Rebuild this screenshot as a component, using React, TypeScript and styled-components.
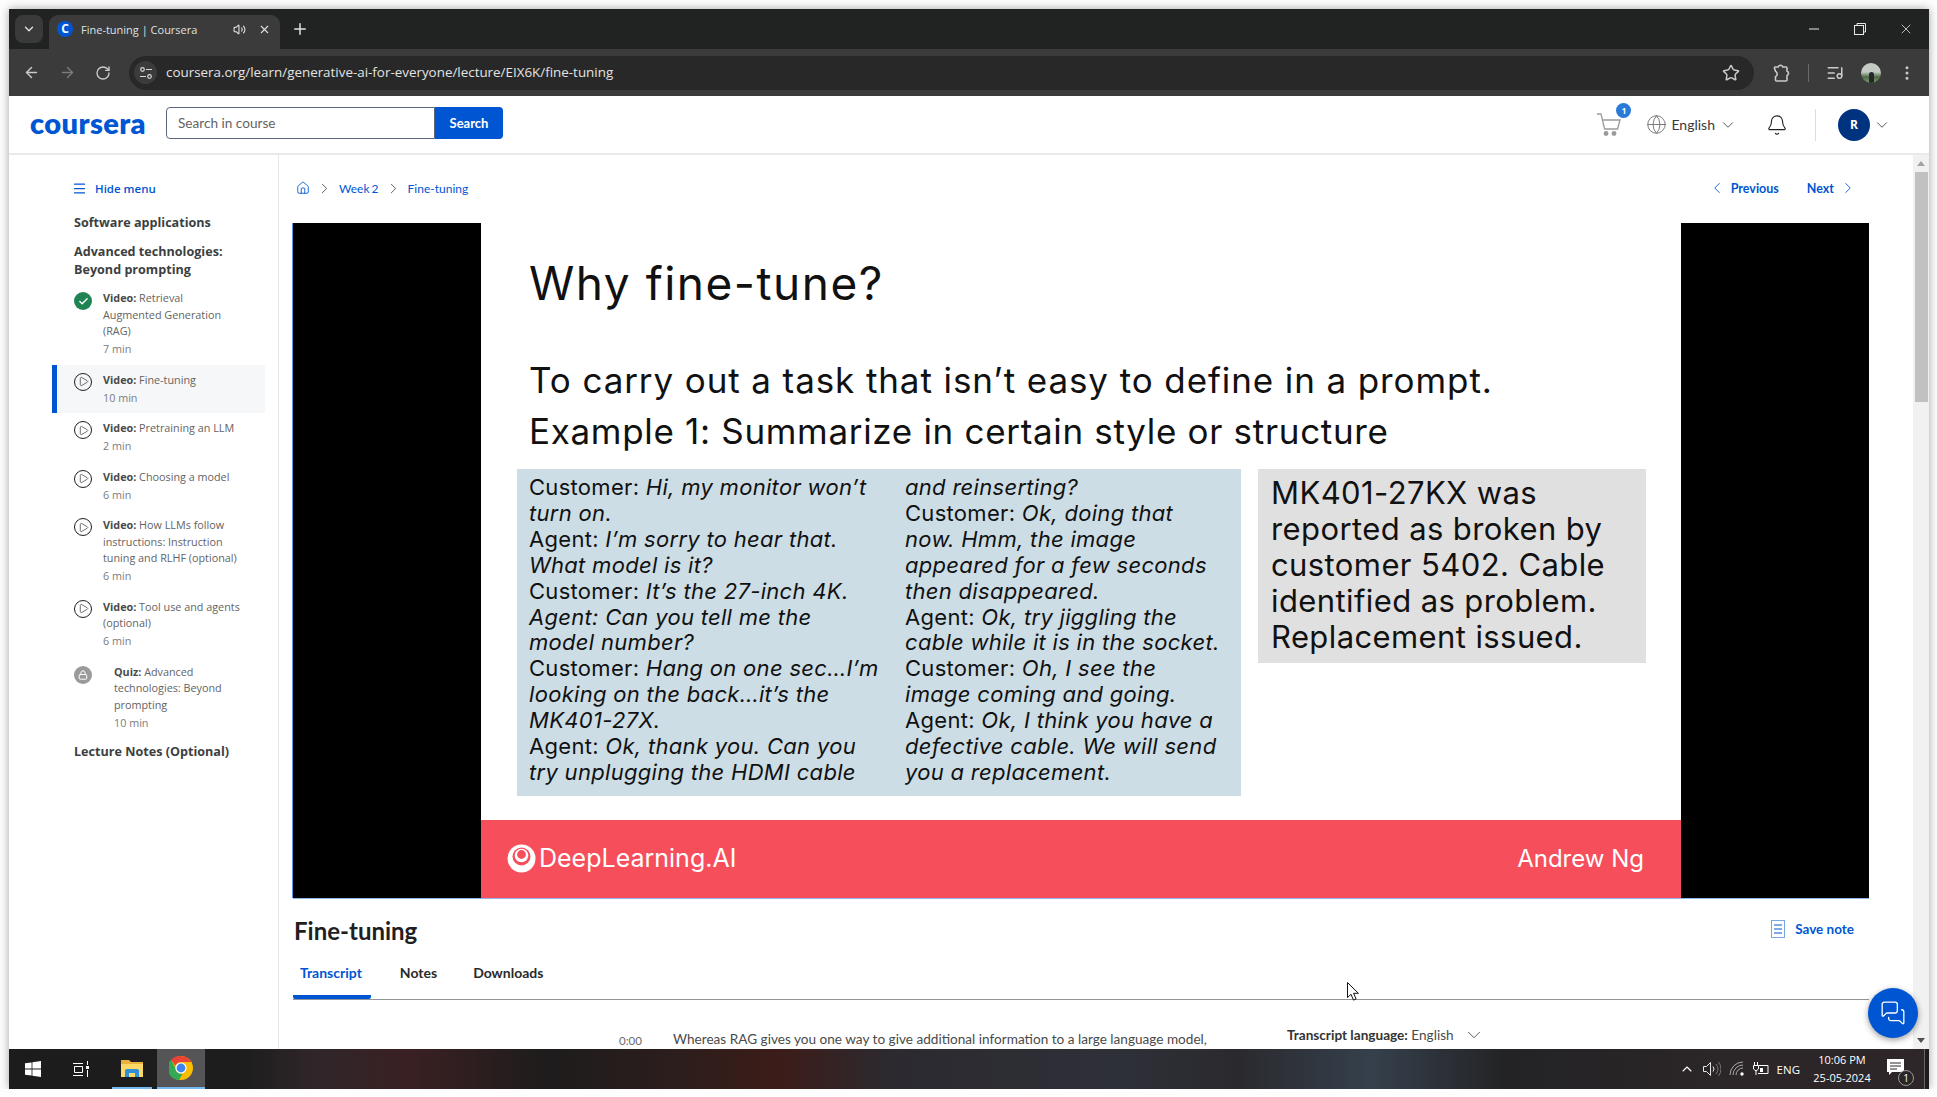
import * as React from "react";
import styled, { createGlobalStyle } from "styled-components";
import {
  ArrowLeft,
  ArrowRight,
  Bell,
  Check,
  ChevronDown,
  ChevronLeft,
  ChevronRight,
  ChevronUp,
  EllipsisVertical,
  Globe,
  House,
  ListMusic,
  Lock,
  Menu,
  MessagesSquare,
  Play,
  Plus,
  RotateCw,
  Star,
  Volume2,
  X,
} from "lucide-react";

const blue = "#0056d2";
const uiFont = `"Open Sans", "Liberation Sans", sans-serif`;
const pageFont = `Lato, "Open Sans", sans-serif`;
const slideFont = `Inter, "Open Sans", sans-serif`;

const GlobalStyle = createGlobalStyle`
  html, body {
    margin: 0;
    padding: 0;
    background: #fdfdfd;
  }
  * {
    box-sizing: border-box;
  }
`;

const SWindow = styled.div`
  position: relative;
  margin: 9px 0 0 9px;
  width: 1920px;
  height: 1080px;
  display: flex;
  flex-direction: column;
  overflow: hidden;
  background: #fff;
  box-shadow: 0 0 9px rgba(0, 0, 0, 0.35);
  font-family: ${uiFont};
`;

const STabStrip = styled.div`
  height: 40px;
  flex: none;
  display: flex;
  align-items: flex-end;
  padding-left: 6px;
  background: #212322;
  color: #dfe1e0;
`;

const STabMenu = styled.div`
  width: 28px;
  height: 28px;
  margin-bottom: 6px;
  border-radius: 8px;
  background: #3a3a3a;
  display: flex;
  align-items: center;
  justify-content: center;
`;

const STab = styled.div`
  width: 231px;
  height: 34px;
  margin-left: 6px;
  padding: 0 8px 6px;
  border-radius: 9px 9px 0 0;
  background: #3b3b3b;
  display: flex;
  align-items: center;
  font-size: 11px;
`;

const SFavicon = styled.div`
  width: 16px;
  height: 16px;
  margin-right: 8px;
  border-radius: 50%;
  background: ${blue};
  color: #fff;
  font: 700 12px/16px ${uiFont};
  text-align: center;
`;

const STabTitle = styled.span`
  width: 152px;
  white-space: nowrap;
`;

const STabClose = styled.span`
  margin-left: 12px;
  display: flex;
`;

const SNewTab = styled.div`
  height: 34px;
  margin-left: 11px;
  padding-bottom: 6px;
  display: flex;
  align-items: center;
`;

const SWindowControls = styled.div`
  margin-left: auto;
  align-self: stretch;
  display: flex;
`;

const SWindowControl = styled.div`
  width: 46px;
  display: flex;
  align-items: center;
  justify-content: center;
`;

const SToolbar = styled.div`
  height: 47px;
  flex: none;
  display: flex;
  align-items: center;
  padding-left: 4px;
  background: #3b3b3b;
  color: #c9cbca;
`;

const SNavButton = styled.div<{ $dim?: boolean }>`
  width: 36px;
  display: flex;
  justify-content: center;
  color: ${({ $dim }) => ($dim ? "#7b7b7b" : "#c9cbca")};
`;

const SOmnibox = styled.div`
  width: 1625px;
  height: 34px;
  margin-left: 8px;
  padding: 0 14px 0 5px;
  border-radius: 17px;
  background: #282828;
  display: flex;
  align-items: center;
`;

const SSiteInfo = styled.div`
  width: 23px;
  height: 23px;
  margin-right: 9px;
  border-radius: 50%;
  background: #3b3b3b;
  display: flex;
  align-items: center;
  justify-content: center;
`;

const SUrl = styled.span`
  margin-bottom: 1px;
  color: #e3e3e3;
  font-size: 13.4px;
  white-space: nowrap;
`;

const SStar = styled.span`
  margin-left: auto;
  display: flex;
`;

const SToolCluster = styled.div`
  margin-left: 17px;
  display: flex;
  align-items: center;
  gap: 17px;
`;

const SToolDivider = styled.div`
  width: 1px;
  height: 18px;
  background: #6a6a6a;
`;

const SProfile = styled.div`
  width: 20px;
  height: 20px;
  border-radius: 50%;
  background: linear-gradient(#c3cbc4 0 45%, #4f6b45 70%, #7d9a6b 100%);
  overflow: hidden;
  display: flex;
  justify-content: center;
  align-items: flex-end;
  &::after {
    content: "";
    width: 5px;
    height: 11px;
    border-radius: 3px 3px 0 0;
    background: #25282b;
  }
`;

const SPageHeader = styled.header`
  height: 59px;
  flex: none;
  display: flex;
  align-items: center;
  padding: 0 38px 0 21px;
  border-bottom: 2px solid #e8e9ea;
`;

const SLogo = styled.div`
  width: 115px;
  margin-bottom: 3px;
  color: ${blue};
  font: 800 29px/30px Lato, sans-serif;
  letter-spacing: 0.4px;
  white-space: nowrap;
`;

const SSearch = styled.div`
  margin: 0 0 3px 21px;
  display: flex;
  height: 32px;
`;

const SSearchInput = styled.div`
  width: 269px;
  padding-left: 11px;
  border: 1px solid #5b6780;
  border-radius: 4px 0 0 4px;
  color: #636363;
  font: 400 13.6px/30px ${pageFont};
`;

const SSearchButton = styled.div`
  width: 68px;
  border-radius: 0 4px 4px 0;
  background: ${blue};
  color: #fff;
  text-align: center;
  font: 700 13px/32px ${pageFont};
`;

const SCart = styled.div`
  position: relative;
  margin-left: auto;
  width: 24px;
  height: 24px;
`;

const SCartBadge = styled.span`
  position: absolute;
  top: -10px;
  right: -10px;
  width: 15px;
  height: 15px;
  border-radius: 50%;
  background: #2a7ad8;
  color: #fff;
  font: 700 8px/15px ${uiFont};
  text-align: center;
`;

const SLanguage = styled.div`
  margin-left: 25px;
  display: flex;
  align-items: center;
  gap: 4px;
  color: #3a3a3a;
  font: 400 14px/20px ${pageFont};
`;

const SBell = styled.div`
  margin-left: 29px;
  display: flex;
  color: #1f1f1f;
`;

const SHeaderDivider = styled.div`
  width: 1px;
  height: 32px;
  margin-left: 27px;
  background: #dcdedf;
`;

const SAvatar = styled.div`
  width: 32px;
  height: 32px;
  margin: 0 3px 0 22px;
  border-radius: 50%;
  background: #00337f;
  color: #fff;
  font: 700 12px/32px ${uiFont};
  text-align: center;
`;

const SBody = styled.div`
  flex: 1;
  min-height: 0;
  display: flex;
  overflow: hidden;
`;

const SSidebar = styled.aside`
  width: 270px;
  flex: none;
  padding: 23px 0 0 43px;
  border-right: 1px solid #e5e7e8;
`;

const SHideMenu = styled.div`
  height: 20px;
  margin-left: 20px;
  display: flex;
  align-items: center;
  gap: 8px;
  color: ${blue};
  font-size: 11.5px;
  font-weight: 600;
`;

const SSection = styled.div<{ $top: number }>`
  width: 180px;
  margin: ${({ $top }) => $top}px 0 0 22px;
  color: #3c3f41;
  font-size: 12.6px;
  line-height: 18px;
  font-weight: 700;
`;

const SItems = styled.div`
  width: 213px;
  margin-top: 4px;
`;

const SItem = styled.div<{ $active?: boolean }>`
  padding: 7px 0 7px ${({ $active }) => ($active ? 17 : 22)}px;
  display: flex;
  border-left: ${({ $active }) => ($active ? `5px solid ${blue}` : "none")};
  background: ${({ $active }) => ($active ? "#f5f7f8" : "transparent")};
`;

const SItemIcon = styled.div<{ $kind: string }>`
  width: 18px;
  height: 18px;
  flex: none;
  margin-top: ${({ $kind }) => ($kind === "play" ? 1 : 2)}px;
  border-radius: 50%;
  display: flex;
  align-items: center;
  justify-content: center;
  color: ${({ $kind }) => ($kind === "play" ? "#1f1f1f" : "#fff")};
  border: ${({ $kind }) => ($kind === "play" ? "1px solid #1f1f1f" : "none")};
  background: ${({ $kind }) =>
    $kind === "done" ? "#1f8354" : $kind === "lock" ? "#9a9a9a" : "transparent"};
`;

const SItemText = styled.div<{ $quiz?: boolean }>`
  width: 140px;
  margin-left: ${({ $quiz }) => ($quiz ? 22 : 11)}px;
  color: #636363;
  font-size: 10.8px;
  line-height: 16.5px;
  & b {
    color: #4a4a4a;
    font-weight: 700;
  }
`;

const SItemTime = styled.div`
  height: 18px;
  padding-top: 1.5px;
  color: #7c7c7c;
`;

const SMain = styled.main`
  flex: 1;
  min-width: 0;
  padding: 23px 44px 0 14px;
  font-family: ${pageFont};
`;

const SCrumbRow = styled.div`
  height: 20px;
  display: flex;
  align-items: center;
  justify-content: space-between;
  padding: 0 12px 0 3px;
`;

const SCrumbs = styled.div`
  display: flex;
  align-items: center;
  gap: 6px;
  color: ${blue};
  font-size: 12px;
  word-spacing: -1px;
  & > svg:nth-child(even) {
    color: #444;
  }
`;

const SPager = styled.div`
  display: flex;
  align-items: center;
  color: ${blue};
  font-size: 12.5px;
  font-weight: 700;
`;

const SPagerLink = styled.span`
  display: flex;
  align-items: center;
  gap: 5px;
  & + & {
    margin-left: 28px;
  }
`;

const SVideo = styled.div`
  width: 1576px;
  height: 675px;
  margin-top: 25px;
  display: flex;
  justify-content: center;
  background: #000;
  box-shadow: -1px 0 0 #5f95ea, 0 1px 0 #8fb8e8;
`;

const SSlide = styled.div`
  width: 1200px;
  display: flex;
  flex-direction: column;
  background: #fff;
  color: #111;
  font-family: ${slideFont};
`;

const SSlideBody = styled.div`
  flex: 1;
  padding: 34px 0 0 36px;
`;

const SSlideTitle = styled.h1`
  margin: 0 0 0 12px;
  height: 52px;
  font-size: 46px;
  line-height: 52px;
  font-weight: 400;
  letter-spacing: 1.5px;
  white-space: nowrap;
`;

const SSlideLead = styled.div`
  margin: 46px 0 12px 12px;
  font-size: 35px;
  line-height: 51px;
`;

const SLeadLine = styled.div<{ $spacing: number }>`
  letter-spacing: ${({ $spacing }) => $spacing}px;
  white-space: nowrap;
`;

const SSlideRow = styled.div`
  display: flex;
  align-items: flex-start;
  gap: 17px;
`;

const SDialog = styled.div`
  width: 724px;
  height: 327px;
  padding: 6px 0 0 12px;
  display: grid;
  grid-template-columns: 376px 1fr;
  background: #ccdde6;
  font-size: 22px;
  line-height: 25.9px;
  letter-spacing: 0.3px;
  white-space: nowrap;
`;

const SSummary = styled.div`
  width: 388px;
  height: 194px;
  padding: 6px 0 0 13px;
  background: #e0e0e0;
  font-size: 31px;
  line-height: 36px;
  letter-spacing: 0.4px;
  white-space: nowrap;
`;

const SSlideFooter = styled.div`
  height: 78px;
  flex: none;
  padding: 0 37px 2px 26px;
  display: flex;
  align-items: center;
  justify-content: space-between;
  background: #f64e5a;
  color: #fff;
`;

const SBrand = styled.div`
  display: flex;
  align-items: center;
  gap: 3px;
  font-size: 25px;
`;

const SAuthor = styled.div`
  font-size: 24px;
`;

const STitleRow = styled.div`
  height: 30px;
  margin-top: 17px;
  padding: 0 15px 0 1px;
  display: flex;
  align-items: center;
  justify-content: space-between;
`;

const SLessonTitle = styled.h2`
  margin: 0;
  color: #1f1f1f;
  font-size: 24px;
  font-weight: 700;
`;

const SSaveNote = styled.div`
  margin-bottom: 2px;
  display: flex;
  align-items: center;
  gap: 10px;
  color: ${blue};
  font-size: 13.5px;
  font-weight: 700;
`;

const STabs = styled.div`
  margin-top: 7px;
  display: flex;
  gap: 22px;
  border-bottom: 1px solid #929599;
`;

const STabItem = styled.div<{ $active?: boolean }>`
  height: 47px;
  padding: 12px ${({ $active }) => ($active ? 9 : 7)}px 0 7px;
  color: ${({ $active }) => ($active ? blue : "#2a2a2a")};
  border-bottom: 4px solid ${({ $active }) => ($active ? blue : "transparent")};
  border-radius: 0 0 2px 2px;
  font-size: 14px;
  line-height: 18px;
  font-weight: 700;
`;

const STranscript = styled.div`
  margin-top: 24px;
  padding-left: 326px;
  display: flex;
  align-items: flex-start;
  color: #4a4a4a;
  font-size: 13.6px;
`;

const STime = styled.span`
  width: 54px;
  margin-top: 8px;
  color: #6a6a6a;
  font-size: 11.5px;
  line-height: 18px;
`;

const SLine = styled.span`
  width: 534px;
  margin-top: 6px;
  line-height: 18px;
  white-space: nowrap;
`;

const SLanguagePick = styled.span`
  margin-left: 80px;
  display: flex;
  align-items: center;
  gap: 9px;
  line-height: 20px;
  white-space: nowrap;
  & b {
    font-weight: 700;
    color: #333;
  }
`;

const SScrollbar = styled.div`
  width: 16px;
  flex: none;
  display: flex;
  flex-direction: column;
  align-items: center;
  background: #f1f1f1;
  color: #a3a3a3;
`;

const SScrollArrow = styled.div<{ $down?: boolean }>`
  height: 17px;
  display: flex;
  align-items: center;
  margin-top: ${({ $down }) => ($down ? "auto" : 0)};
`;

const SScrollTriangle = styled.span<{ $down?: boolean }>`
  width: 0;
  height: 0;
  border-left: 4px solid transparent;
  border-right: 4px solid transparent;
  border-top: ${({ $down }) => ($down ? "5px solid #505050" : "none")};
  border-bottom: ${({ $down }) => ($down ? "none" : "5px solid #a3a3a3")};
`;

const SScrollThumb = styled.div`
  width: 13px;
  height: 230px;
  background: #c1c1c1;
`;

const SChat = styled.div`
  position: absolute;
  top: 979px;
  right: 11px;
  width: 50px;
  height: 50px;
  border-radius: 50%;
  background: ${blue};
  color: #fff;
  display: flex;
  align-items: center;
  justify-content: center;
  box-shadow: 0 2px 6px rgba(0, 0, 0, 0.4);
`;

const SCursor = styled.svg`
  position: absolute;
  top: 973px;
  left: 1338px;
`;

const STaskbar = styled.footer`
  height: 40px;
  flex: none;
  display: flex;
  align-items: stretch;
  color: #fff;
  background: linear-gradient(
    90deg,
    #1c1c1c 0,
    #1d1d1d 12%,
    #30262a 16%,
    #3a2022 21%,
    #1e1c1c 28%,
    #2c1e1c 35%,
    #3c1c18 40%,
    #2c2a30 46%,
    #2e3038 58%,
    #2a2a2e 64%,
    #35404c 71%,
    #232325 78%,
    #2c2628 90%,
    #2e2628 100%
  );
`;

const STaskCell = styled.div`
  width: 48px;
  display: flex;
  align-items: center;
  justify-content: center;
`;

const SExplorerCell = styled(STaskCell)`
  width: 40px;
  margin: 0 5px 0 7px;
  border-bottom: 2px solid #76b9ed;
`;

const SChromeCell = styled(STaskCell)`
  background: #555558;
  border-bottom: 2px solid #76b9ed;
`;

const STray = styled.div`
  margin-left: auto;
  padding-right: 17px;
  display: flex;
  align-items: center;
  gap: 8px;
  font-size: 11.5px;
`;

const SClock = styled.div`
  width: 62px;
  margin: 0 6px 0 3px;
  text-align: center;
  line-height: 18px;
  font-size: 11px;
`;

const SNotify = styled.div`
  position: relative;
  width: 20px;
  height: 20px;
  display: flex;
`;

const SNotifyCount = styled.span`
  position: absolute;
  right: -7px;
  bottom: -7px;
  width: 16px;
  height: 16px;
  border: 1px solid #999;
  border-radius: 50%;
  background: #2a2628;
  font-size: 10px;
  line-height: 14px;
  text-align: center;
`;

const SShowDesktop = styled.div`
  width: 5px;
  flex: none;
  border-left: 1px solid #666;
  background: #1e1c1c;
`;

const items = [
  { kind: "done", label: "Video:", text: "Retrieval Augmented Generation (RAG)", time: "7 min" },
  { kind: "play", label: "Video:", text: "Fine-tuning", time: "10 min", active: true },
  { kind: "play", label: "Video:", text: "Pretraining an LLM", time: "2 min" },
  { kind: "play", label: "Video:", text: "Choosing a model", time: "6 min" },
  { kind: "play", label: "Video:", text: "How LLMs follow instructions: Instruction tuning and RLHF (optional)", time: "6 min" },
  { kind: "play", label: "Video:", text: "Tool use and agents (optional)", time: "6 min" },
  { kind: "lock", label: "Quiz:", text: "Advanced technologies: Beyond prompting", time: "10 min" },
];

// [plain part, italic part]
const dialogLeft = [
  ["Customer: ", "Hi, my monitor won’t"],
  ["", "turn on."],
  ["Agent: ", "I’m sorry to hear that."],
  ["", "What model is it?"],
  ["Customer: ", "It’s the 27-inch 4K."],
  ["", "Agent: Can you tell me the"],
  ["", "model number?"],
  ["Customer: ", "Hang on one sec…I’m"],
  ["", "looking on the back…it’s the"],
  ["", "MK401-27X."],
  ["Agent: ", "Ok, thank you. Can you"],
  ["", "try unplugging the HDMI cable"],
];

const dialogRight = [
  ["", "and reinserting?"],
  ["Customer: ", "Ok, doing that"],
  ["", "now. Hmm, the image"],
  ["", "appeared for a few seconds"],
  ["", "then disappeared."],
  ["Agent: ", "Ok, try jiggling the"],
  ["", "cable while it is in the socket."],
  ["Customer: ", "Oh, I see the"],
  ["", "image coming and going."],
  ["Agent: ", "Ok, I think you have a"],
  ["", "defective cable. We will send"],
  ["", "you a replacement."],
];

const summary = [
  "MK401-27KX was",
  "reported as broken by",
  "customer 5402. Cable",
  "identified as problem.",
  "Replacement issued.",
];

const DialogColumn = ({ lines }: { lines: string[][] }) => (
  <div>
    {lines.map(([plain, italic]) => (
      <div key={plain + italic}>
        {plain}
        <i>{italic}</i>
      </div>
    ))}
  </div>
);

const ItemIcon = ({ kind }: { kind: string }) => (
  <SItemIcon $kind={kind}>
    {kind === "done" && <Check size={11} strokeWidth={3} />}
    {kind === "play" && <Play size={11} strokeWidth={1.4} />}
    {kind === "lock" && <Lock size={10} strokeWidth={2.4} />}
  </SItemIcon>
);

const CartIcon = () => (
  <svg width="24" height="24" viewBox="0 0 24 24" fill="none" stroke="#9b9b9b" strokeWidth="1.3">
    <path d="M0 1h4l3.6 15h13L23 7H5.4" />
    <circle cx="9" cy="20.5" r="2.4" fill="#9b9b9b" stroke="none" />
    <circle cx="17" cy="20.5" r="2.4" fill="#9b9b9b" stroke="none" />
  </svg>
);

const SiteInfoIcon = () => (
  <svg width="14" height="14" viewBox="0 0 14 14" fill="none" stroke="#d8d8d8" strokeWidth="1.2">
    <circle cx="3.5" cy="3.5" r="1.8" />
    <path d="M7 3.5h6M1 10.5h6" />
    <circle cx="10.5" cy="10.5" r="1.8" />
  </svg>
);

const ExtensionIcon = () => (
  <svg width="20" height="20" viewBox="0 0 20 20" fill="none" stroke="#c9cbca" strokeWidth="1.6" strokeLinejoin="round">
    <path d="M4 4h3.2a2.4 2.4 0 0 1 4.6 0H15a1 1 0 0 1 1 1v3.2a2.2 2.2 0 0 1 0 4.2V17a1 1 0 0 1-1 1H5.5a1 1 0 0 1-1-1v-3.4a3 3 0 0 0 0-5.4L3.4 5a.8.8 0 0 1 .6-1z" />
  </svg>
);

const RestoreIcon = () => (
  <svg width="12" height="12" viewBox="0 0 12 12" fill="none" stroke="#e8e8e8" strokeWidth="1">
    <rect x="0.5" y="2.5" width="9" height="9" />
    <path d="M3 2.5V0.5h8.5V9H9.5" />
  </svg>
);

const MinimizeIcon = () => (
  <svg width="12" height="12" viewBox="0 0 12 12" stroke="#e8e8e8" strokeWidth="1">
    <path d="M1 6h10" />
  </svg>
);

const NoteIcon = () => (
  <svg width="14" height="18" viewBox="0 0 14 18" fill="none">
    <rect x="0.5" y="0.5" width="13" height="17" stroke="#7aa7e8" />
    <path d="M3 5h8M3 9h8M3 13h8" stroke={blue} strokeWidth="1.2" />
  </svg>
);

const BrandMark = () => (
  <svg width="29" height="29" viewBox="0 0 29 29" fill="none">
    <circle cx="14.5" cy="14.5" r="14" fill="#fff" />
    <circle cx="14.5" cy="12.5" r="9" fill="#f64e5a" />
    <circle cx="14.5" cy="11.5" r="6.8" fill="#fff" />
    <circle cx="14.5" cy="10.5" r="4.4" fill="#f64e5a" />
  </svg>
);

const WindowsIcon = () => (
  <svg width="16" height="16" viewBox="0 0 16 16" fill="#fff">
    <path d="M0 2.3 6.6 1.4v6.1H0zM7.4 1.3 16 0v7.5H7.4zM0 8.4h6.6v6.2L0 13.7zM7.4 8.4H16V16l-8.6-1.3z" />
  </svg>
);

const TaskViewIcon = () => (
  <svg width="17" height="16" viewBox="0 0 17 16" fill="none" stroke="#fff" strokeWidth="1">
    <path d="M0 2.5h10M1.5 5.5h8v6h-8zM0 14.5h10M14.5 0v4M14.5 9v7" />
    <rect x="13" y="5" width="3" height="3" fill="#fff" stroke="none" />
  </svg>
);

const ExplorerIcon = () => (
  <svg width="22" height="18" viewBox="0 0 22 18">
    <path d="M0 1h8l2 2h12v15H0z" fill="#e8b23c" />
    <path d="M0 5h22v13H0z" fill="#fbd968" />
    <path d="M4 18v-6a2 2 0 0 1 2-2h10a2 2 0 0 1 2 2v6h-4v-4H8v4z" fill="#2f8fd8" />
  </svg>
);

const ChromeIcon = () => (
  <svg width="24" height="24" viewBox="0 0 24 24">
    <circle cx="12" cy="12" r="12" fill="#fbbc04" />
    <path d="M12 0a12 12 0 0 1 10.4 6H12a6 6 0 0 0-5.6 3.8L2 3.8A12 12 0 0 1 12 0z" fill="#ea4335" />
    <path d="M2 3.8l4.6 8.4a6 6 0 0 0 7 5.6L10 24A12 12 0 0 1 2 3.8z" fill="#34a853" />
    <circle cx="12" cy="12" r="5.6" fill="#fff" />
    <circle cx="12" cy="12" r="4.4" fill="#3f82f1" />
  </svg>
);

const SpeakerIcon = () => (
  <svg width="18" height="16" viewBox="0 0 18 16" fill="none" stroke="#e8e8e8" strokeWidth="1">
    <path d="M.5 5.5h3l4-4v13l-4-4h-3z" />
    <path d="M10 5.5a4 4 0 0 1 0 5" />
    <path d="M13 3a8 8 0 0 1 0 10M15.5 1a11 11 0 0 1 0 14" stroke="#777" />
  </svg>
);

const WifiIcon = () => (
  <svg width="16" height="16" viewBox="0 0 16 16" fill="none" stroke="#a8a8a8" strokeWidth="1">
    <path d="M1 14A13 13 0 0 1 14 1M4 14A10 10 0 0 1 14 4M7 14a7 7 0 0 1 7-7" />
    <circle cx="13" cy="13" r="1.7" fill="#fff" stroke="none" />
  </svg>
);

const BatteryIcon = () => (
  <svg width="16" height="14" viewBox="0 0 16 14" fill="none" stroke="#fff" strokeWidth="1">
    <path d="M6 3.5h9v8H5" />
    <path d="M1.5 0v3M4.5 0v3M0.5 3.5h5V7L3 9 .5 7zM3 9v4" />
    <rect x="7" y="6" width="3" height="4" fill="#fff" stroke="none" />
  </svg>
);

const NotifyIcon = () => (
  <svg width="17" height="17" viewBox="0 0 17 17">
    <path d="M0 0h17v13H5l-3 3v-3H0z" fill="#fff" />
    <path d="M3 4h11M3 7h11M3 10h7" stroke="#2a2628" strokeWidth="1" />
  </svg>
);

const App = () => (
  <>
    <GlobalStyle />
    <SWindow>
      <STabStrip>
        <STabMenu>
          <ChevronDown size={14} strokeWidth={2.4} />
        </STabMenu>
        <STab>
          <SFavicon>C</SFavicon>
          <STabTitle>Fine-tuning | Coursera</STabTitle>
          <Volume2 size={13} />
          <STabClose>
            <X size={13} />
          </STabClose>
        </STab>
        <SNewTab>
          <Plus size={18} />
        </SNewTab>
        <SWindowControls>
          <SWindowControl>
            <MinimizeIcon />
          </SWindowControl>
          <SWindowControl>
            <RestoreIcon />
          </SWindowControl>
          <SWindowControl>
            <X size={16} strokeWidth={1.2} />
          </SWindowControl>
        </SWindowControls>
      </STabStrip>

      <SToolbar>
        <SNavButton>
          <ArrowLeft size={17} />
        </SNavButton>
        <SNavButton $dim>
          <ArrowRight size={17} />
        </SNavButton>
        <SNavButton>
          <RotateCw size={16} />
        </SNavButton>
        <SOmnibox>
          <SSiteInfo>
            <SiteInfoIcon />
          </SSiteInfo>
          <SUrl>coursera.org/learn/generative-ai-for-everyone/lecture/EIX6K/fine-tuning</SUrl>
          <SStar>
            <Star size={18} />
          </SStar>
        </SOmnibox>
        <SToolCluster>
          <ExtensionIcon />
          <SToolDivider />
          <ListMusic size={18} />
          <SProfile />
          <EllipsisVertical size={18} />
        </SToolCluster>
      </SToolbar>

      <SPageHeader>
        <SLogo>coursera</SLogo>
        <SSearch>
          <SSearchInput>Search in course</SSearchInput>
          <SSearchButton>Search</SSearchButton>
        </SSearch>
        <SCart>
          <CartIcon />
          <SCartBadge>1</SCartBadge>
        </SCart>
        <SLanguage>
          <Globe size={21} strokeWidth={1} color="#6a6a6a" />
          English
          <ChevronDown size={18} strokeWidth={1.1} />
        </SLanguage>
        <SBell>
          <Bell size={22} strokeWidth={1.2} />
        </SBell>
        <SHeaderDivider />
        <SAvatar>R</SAvatar>
        <ChevronDown size={18} strokeWidth={1.1} color="#333" />
      </SPageHeader>

      <SBody>
        <SSidebar>
          <SHideMenu>
            <Menu size={15} />
            Hide menu
          </SHideMenu>
          <SSection $top={16}>Software applications</SSection>
          <SSection $top={11}>Advanced technologies: Beyond prompting</SSection>
          <SItems>
            {items.map((item) => (
              <SItem key={item.text} $active={item.active}>
                <ItemIcon kind={item.kind} />
                <SItemText $quiz={item.kind === "lock"}>
                  <b>{item.label}</b> {item.text}
                  <SItemTime>{item.time}</SItemTime>
                </SItemText>
              </SItem>
            ))}
          </SItems>
          <SSection $top={5}>Lecture Notes (Optional)</SSection>
        </SSidebar>

        <SMain>
          <SCrumbRow>
            <SCrumbs>
              <House size={14} strokeWidth={1.5} />
              <ChevronRight size={17} strokeWidth={1.2} />
              <span>Week 2</span>
              <ChevronRight size={17} strokeWidth={1.2} />
              <span>Fine-tuning</span>
            </SCrumbs>
            <SPager>
              <SPagerLink>
                <ChevronLeft size={18} strokeWidth={1.2} />
                Previous
              </SPagerLink>
              <SPagerLink>
                Next
                <ChevronRight size={18} strokeWidth={1.2} />
              </SPagerLink>
            </SPager>
          </SCrumbRow>

          <SVideo>
            <SSlide>
              <SSlideBody>
                <SSlideTitle>Why fine-tune?</SSlideTitle>
                <SSlideLead>
                  <SLeadLine $spacing={0.9}>To carry out a task that isn’t easy to define in a prompt.</SLeadLine>
                  <SLeadLine $spacing={0.68}>Example 1: Summarize in certain style or structure</SLeadLine>
                </SSlideLead>
                <SSlideRow>
                  <SDialog>
                    <DialogColumn lines={dialogLeft} />
                    <DialogColumn lines={dialogRight} />
                  </SDialog>
                  <SSummary>
                    {summary.map((line) => (
                      <div key={line}>{line}</div>
                    ))}
                  </SSummary>
                </SSlideRow>
              </SSlideBody>
              <SSlideFooter>
                <SBrand>
                  <BrandMark />
                  DeepLearning.AI
                </SBrand>
                <SAuthor>Andrew Ng</SAuthor>
              </SSlideFooter>
            </SSlide>
          </SVideo>

          <STitleRow>
            <SLessonTitle>Fine-tuning</SLessonTitle>
            <SSaveNote>
              <NoteIcon />
              Save note
            </SSaveNote>
          </STitleRow>

          <STabs>
            <STabItem $active>Transcript</STabItem>
            <STabItem>Notes</STabItem>
            <STabItem>Downloads</STabItem>
          </STabs>

          <STranscript>
            <STime>0:00</STime>
            <SLine>Whereas RAG gives you one way to give additional information to a large language model,</SLine>
            <SLanguagePick>
              <span>
                <b>Transcript language:</b> English
              </span>
              <ChevronDown size={22} strokeWidth={1} />
            </SLanguagePick>
          </STranscript>
        </SMain>

        <SScrollbar>
          <SScrollArrow>
            <SScrollTriangle />
          </SScrollArrow>
          <SScrollThumb />
          <SScrollArrow $down>
            <SScrollTriangle $down />
          </SScrollArrow>
        </SScrollbar>
      </SBody>

      <STaskbar>
        <STaskCell>
          <WindowsIcon />
        </STaskCell>
        <STaskCell>
          <TaskViewIcon />
        </STaskCell>
        <SExplorerCell>
          <ExplorerIcon />
        </SExplorerCell>
        <SChromeCell>
          <ChromeIcon />
        </SChromeCell>
        <STray>
          <ChevronUp size={16} strokeWidth={1.6} />
          <SpeakerIcon />
          <WifiIcon />
          <BatteryIcon />
          <span>ENG</span>
          <SClock>
            10:06 PM
            <br />
            25-05-2024
          </SClock>
          <SNotify>
            <NotifyIcon />
            <SNotifyCount>1</SNotifyCount>
          </SNotify>
        </STray>
        <SShowDesktop />
      </STaskbar>

      <SChat>
        <MessagesSquare size={26} strokeWidth={1.2} />
      </SChat>
      <SCursor width="12" height="19" viewBox="0 0 12 19">
        <path d="M0.5 0.5v15l3.5-3.2 2.5 5.8 2.6-1.1-2.5-5.7h4.8z" fill="#fff" stroke="#111" strokeWidth="1" />
      </SCursor>
    </SWindow>
  </>
);

export default App;
